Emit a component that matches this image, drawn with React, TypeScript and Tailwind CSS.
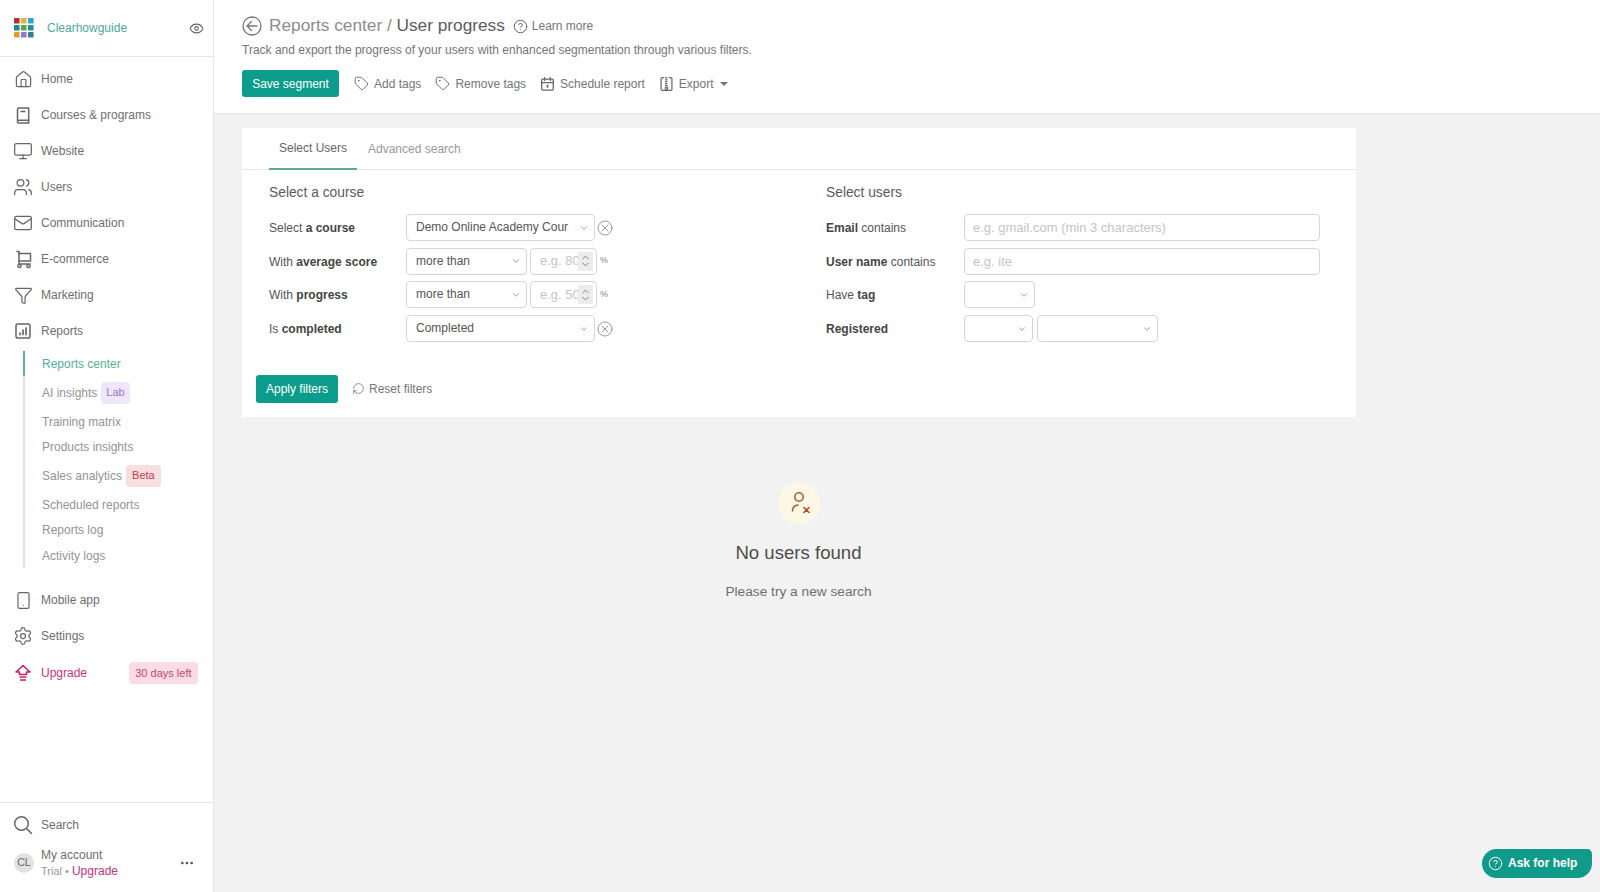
import React from "react";
import { House, Monitor, Users, Mail, Funnel, Smartphone, Settings, Eye, CircleHelp, Tag, ChevronDown, ChevronUp, RotateCcw, Ellipsis } from "lucide-react";

const Book = () => (
  <svg width="19" height="19" viewBox="0 0 19 19" fill="none" stroke="currentColor" strokeWidth="1.5" strokeLinejoin="round">
    <path d="M3.5 15.5V3.2a1.2 1.2 0 0 1 1.2-1.2h10v15H4.8a1.3 1.3 0 0 1-1.3-1.5Zm0 0a1.3 1.3 0 0 1 1.3-1.3h9.9" />
    <path d="M6.5 5.5h5" />
  </svg>
);
const Chart = () => (
  <svg width="18" height="18" viewBox="0 0 18 18" fill="none" stroke="currentColor" strokeWidth="1.5" strokeLinecap="round">
    <rect x="2" y="2" width="14" height="14" rx="1.8" />
    <path d="M6 12.5v-1.5M9 12.5V8M12 12.5V6" strokeWidth="1.7" />
  </svg>
);
const Cart = () => (
  <svg width="19" height="19" viewBox="0 0 19 19" fill="none" stroke="currentColor" strokeWidth="1.5" strokeLinejoin="round" strokeLinecap="round">
    <path d="M3 1.5h2v12.5h11" />
    <path d="M5 3.5h11.5v7.5H5" />
    <circle cx="5.5" cy="16" r="1.6" />
    <circle cx="14.5" cy="16" r="1.6" />
  </svg>
);
const UpArrow = () => (
  <svg width="18" height="18" viewBox="0 0 18 18" fill="none" stroke="currentColor" strokeWidth="1.6" strokeLinejoin="round">
    <path d="M9 1.5 16 8h-3.5v2.5h-7V8H2Z" />
    <path d="M5.5 13h7M6 16h6" />
  </svg>
);
const Magnifier = () => (
  <svg width="20" height="20" viewBox="0 0 20 20" fill="none" stroke="currentColor" strokeWidth="1.5" strokeLinecap="round">
    <circle cx="8.5" cy="8.5" r="6.8" />
    <path d="M13.5 13.5 18.5 18.5" />
  </svg>
);
const Logo = () => (
  <svg width="20" height="20" viewBox="0 0 20 20">
    {[["#b8302f", "#e0b33a", "#2aa5d8"], ["#27877f", "#5aa84a", "#2c8f8a"], ["#e39b2e", "#8f7cc8", "#3b7d99"]].flatMap((r, y) =>
      r.map((c, x) => <rect key={`${x}${y}`} x={x * 7} y={y * 7} width="5.6" height="5.6" rx="0.6" fill={c} />)
    )}
  </svg>
);
const NoUser = () => (
  <svg width="26" height="26" viewBox="0 0 26 26" fill="none" stroke="#a9603a" strokeWidth="1.6" strokeLinecap="round">
    <circle cx="13" cy="7" r="4.2" />
    <path d="M6.5 21c0-3.6 2-5.6 5.5-6" />
    <path d="M18 17.5l5 5M23 17.5l-5 5" stroke="#b9482a" />
  </svg>
);
const Back = () => (
  <svg width="20" height="20" viewBox="0 0 20 20" fill="none" stroke="#777" strokeWidth="1.3" strokeLinecap="round" strokeLinejoin="round">
    <circle cx="10" cy="10" r="9" />
    <path d="M15 10H5.5M9.5 5.5 5 10l4.5 4.5" />
  </svg>
);
const Clear = () => (
  <svg width="16" height="16" viewBox="0 0 16 16" fill="none" stroke="#999" strokeWidth="1" strokeLinecap="round" className="ml-[2px] shrink-0">
    <circle cx="8" cy="8" r="7" />
    <path d="M5 5l6 6M11 5l-6 6" />
  </svg>
);
const Cal = () => (
  <svg width="15" height="16" viewBox="0 0 16 16" fill="none" stroke="currentColor" strokeWidth="1.4" strokeLinecap="round" strokeLinejoin="round">
    <rect x="1.8" y="2.8" width="12.4" height="11.7" rx="1.4" />
    <path d="M1.8 6.5h12.4M5 1.2v3M11 1.2v3" />
    <path d="M8 9.5v1.6" strokeWidth="1.8" />
  </svg>
);
const Zip = () => (
  <svg width="15" height="16" viewBox="0 0 16 16" fill="none" stroke="currentColor" strokeWidth="1.3" strokeLinecap="round" strokeLinejoin="round">
    <path d="M5 1.2H3.5A1.3 1.3 0 0 0 2.2 2.5v11a1.3 1.3 0 0 0 1.3 1.3h9a1.3 1.3 0 0 0 1.3-1.3v-11a1.3 1.3 0 0 0-1.3-1.3H11" />
    <path d="M7 1.5h1.5M8.5 3.5H7M7 5.5h1.5M8.5 7.5H7M7 9.5h1.5" />
    <circle cx="8" cy="12.4" r="1.4" />
  </svg>
);

const Nav = ({ icon, label, h = "h-9", cls = "text-[#6e6e6e]" }: { icon: React.ReactNode; label: string; h?: string; cls?: string }) => (
  <div className={`flex items-center ${h} pl-[13px] pr-[16px] ${cls}`}>
    <span className="flex w-[20px] justify-center text-[#666]">{icon}</span>
    <span className="ml-[8px] text-[12px]">{label}</span>
  </div>
);

const Sub = ({ label, h = "h-[25px]", active, children }: { label: string; h?: string; active?: boolean; children?: React.ReactNode }) => (
  <div className={`flex items-center ${h} pt-[1px] pl-[17px] text-[12px] border-l-2 -ml-[2px] ${active ? "border-[#6fa99b] text-[#55ae9c]" : "border-transparent text-[#949494]"}`}>
    {label}
    {children}
  </div>
);

const Select = ({ w, text }: { w: string; text?: string }) => (
  <div className={`${w} h-[27px] shrink-0 flex items-center justify-between border border-[#d6d6d6] rounded-[4px] pl-[9px] pr-[5px] text-[12px] text-[#555] bg-white overflow-hidden`}>
    <span className="-mt-[1px] whitespace-nowrap">{text}</span>
    <ChevronDown size={10} strokeWidth={2} className="text-[#888] shrink-0" />
  </div>
);

const NumberBox = ({ ph }: { ph: string }) => (
  <div className="w-[67px] h-[27px] ml-[3px] shrink-0 flex items-center border border-[#d6d6d6] rounded-[4px] pl-[9px] bg-white relative overflow-hidden">
    <input readOnly placeholder={ph} className="w-[42px] text-[13px] outline-none placeholder:text-[#c4c4c4] bg-transparent" />
    <span className="absolute right-[3px] top-[3px] w-[15px] h-[19px] bg-[#ececec] flex flex-col items-center justify-center text-[#777]">
      <ChevronUp size={11} strokeWidth={2} className="-mb-[2px]" />
      <ChevronDown size={11} strokeWidth={2} className="-mt-[2px]" />
    </span>
  </div>
);

const Row = ({ label, children, w = "w-[137px]" }: { label: React.ReactNode; children: React.ReactNode; w?: string }) => (
  <div className="flex items-center h-[27px] mb-[6.7px]">
    <div className={`${w} shrink-0 text-[12px] text-[#555] pt-[1px]`}>{label}</div>
    {children}
  </div>
);

const TextBox = ({ ph }: { ph: string }) => (
  <input readOnly placeholder={ph} className="w-[356px] h-[27px] border border-[#d6d6d6] rounded-[4px] px-[8px] text-[13px] outline-none placeholder:text-[#c4c4c4] bg-white" />
);

const Action = ({ icon, label, children }: { icon: React.ReactNode; label: string; children?: React.ReactNode }) => (
  <div className="flex items-center text-[12px] text-[#757575] mr-[14px]">
    <span className="mr-[5px] text-[#666]">{icon}</span>
    {label}
    {children}
  </div>
);

const b = "font-bold text-[#444]";

export default function App() {
  return (
    <div className="h-screen w-full flex overflow-hidden bg-[#f2f2f2] font-['Liberation_Sans',sans-serif] relative">
      <aside className="w-[214px] shrink-0 h-full bg-white border-r border-[#e6e6e6] flex flex-col">
        <div className="h-[57px] shrink-0 border-b border-[#e6e6e6] flex items-center pl-[14px] pr-[9px]">
          <Logo />
          <span className="ml-[13px] text-[12px] text-[#4ba996] flex-1">Clearhowguide</span>
          <Eye size={15} strokeWidth={1.7} className="text-[#666]" />
        </div>
        <nav className="pt-[4px]">
          <Nav icon={<House size={19} strokeWidth={1.5} />} label="Home" />
          <Nav icon={<Book />} label="Courses & programs" />
          <Nav icon={<Monitor size={20} strokeWidth={1.5} />} label="Website" />
          <Nav icon={<Users size={20} strokeWidth={1.5} />} label="Users" />
          <Nav icon={<Mail size={20} strokeWidth={1.5} />} label="Communication" />
          <Nav icon={<Cart />} label="E-commerce" />
          <Nav icon={<Funnel size={19} strokeWidth={1.5} />} label="Marketing" />
          <Nav icon={<Chart />} label="Reports" />
          <div className="ml-[23px] mt-[2px] border-l-2 border-[#e2e2e2] h-[217px]">
            <Sub label="Reports center" active />
            <Sub label="AI insights" h="h-[33px]">
              <span className="ml-[4px] px-[5px] h-[22px] leading-[21px] rounded-[4px] bg-[#efe6fa] text-[#9b72cf] text-[11px]">Lab</span>
            </Sub>
            <Sub label="Training matrix" />
            <Sub label="Products insights" />
            <Sub label="Sales analytics" h="h-[33px]">
              <span className="ml-[4px] px-[6px] h-[22px] leading-[21px] rounded-[4px] bg-[#f8dede] text-[#b8444f] text-[11px]">Beta</span>
            </Sub>
            <Sub label="Scheduled reports" />
            <Sub label="Reports log" />
            <Sub label="Activity logs" h="h-[26px]" />
          </div>
          <div className="mt-[14px]">
            <Nav icon={<Smartphone size={19} strokeWidth={1.5} />} label="Mobile app" />
            <Nav icon={<Settings size={20} strokeWidth={1.5} />} label="Settings" />
            <div className="flex items-center h-[38px] pl-[13px] pr-[15px] text-[#c4337b]">
              <span className="flex w-[20px] justify-center text-[#c2246e]"><UpArrow /></span>
              <span className="ml-[8px] text-[12px] flex-1">Upgrade</span>
              <span className="h-[22px] px-[6.5px] leading-[22px] rounded-[4px] bg-[#fadbe6] text-[#c4476f] text-[11px]">30 days left</span>
            </div>
          </div>
        </nav>
        <div className="flex-1" />
        <div className="border-t border-[#e6e6e6] h-[90px] shrink-0 pt-[4px]">
          <Nav icon={<Magnifier />} label="Search" />
          <div className="flex items-center pl-[14px] pr-[18px] mt-[4px]">
            <span className="w-[20px] h-[20px] rounded-full bg-[#e2e2e2] text-[#666] text-[10.5px] flex items-center justify-center">CL</span>
            <div className="ml-[7px] flex-1">
              <div className="text-[12px] text-[#6e6e6e] leading-[16px]">My account</div>
              <div className="text-[11px] text-[#999] leading-[16px]">Trial • <span className="text-[12px] text-[#c4337b]">Upgrade</span></div>
            </div>
            <Ellipsis size={16} className="text-[#555]" />
          </div>
        </div>
      </aside>

      <main className="flex-1 min-w-0 flex flex-col">
        <header className="h-[114px] shrink-0 bg-white border-b border-[#e6e6e6] pl-[28px] pt-[16px]">
          <div className="flex items-center h-[20px]">
            <Back />
            <span className="ml-[7px] text-[17.25px] text-[#8c8c8c]">Reports center / <span className="text-[#5c5c5c]">User progress</span></span>
            <CircleHelp size={15} strokeWidth={1.6} className="ml-[8px] text-[#666]" />
            <span className="ml-[4px] text-[12px] text-[#757575]">Learn more</span>
          </div>
          <p className="mt-[6px] text-[12px] leading-[16px] text-[#757575]">Track and export the progress of your users with enhanced segmentation through various filters.</p>
          <div className="flex items-center mt-[12px]">
            <button className="h-[27px] w-[97px] rounded-[3px] bg-[#0c9c8b] text-white text-[12px] mr-[15px]">Save segment</button>
            <Action icon={<Tag size={15} strokeWidth={1.5} />} label="Add tags" />
            <Action icon={<Tag size={15} strokeWidth={1.5} />} label="Remove tags" />
            <Action icon={<Cal />} label="Schedule report" />
            <Action icon={<Zip />} label="Export">
              <span className="ml-[6px] w-0 h-0 border-l-[4px] border-r-[4px] border-t-[4px] border-l-transparent border-r-transparent border-t-[#777]" />
            </Action>
          </div>
        </header>

        <div className="pl-[28px] pt-[14px]">
          <section className="w-[1114px] h-[289px] bg-white">
            <div className="h-[42px] border-b border-[#e6e6e6] pl-[27px] flex">
              <div className="h-[42px] w-[88px] flex items-center justify-center border-b-2 border-[#5fa796] text-[12px] text-[#666] whitespace-nowrap">Select Users</div>
              <div className="h-[42px] ml-[11px] flex items-center text-[12px] text-[#999]">Advanced search</div>
            </div>
            <div className="flex pl-[27px] pt-[15px]">
              <div className="w-[557px]">
                <h3 className="text-[13.8px] text-[#5a5a5a] leading-[16px] mb-[13px]">Select a course</h3>
                <Row label={<>Select <span className={b}>a course</span></>}>
                  <Select w="w-[189px]" text="Demo Online Academy Cour" />
                  <Clear />
                </Row>
                <Row label={<>With <span className={b}>average score</span></>}>
                  <Select w="w-[121px]" text="more than" />
                  <NumberBox ph="e.g. 80" />
                  <span className="ml-[3px] text-[9px] text-[#888]">%</span>
                </Row>
                <Row label={<>With <span className={b}>progress</span></>}>
                  <Select w="w-[121px]" text="more than" />
                  <NumberBox ph="e.g. 50" />
                  <span className="ml-[3px] text-[9px] text-[#888]">%</span>
                </Row>
                <Row label={<>Is <span className={b}>completed</span></>}>
                  <Select w="w-[189px]" text="Completed" />
                  <Clear />
                </Row>
              </div>
              <div>
                <h3 className="text-[13.8px] text-[#5a5a5a] leading-[16px] mb-[13px]">Select users</h3>
                <Row w="w-[138px]" label={<><span className={b}>Email</span> contains</>}><TextBox ph="e.g. gmail.com (min 3 characters)" /></Row>
                <Row w="w-[138px]" label={<><span className={b}>User name</span> contains</>}><TextBox ph="e.g. ite" /></Row>
                <Row w="w-[138px]" label={<>Have <span className={b}>tag</span></>}><Select w="w-[71px]" /></Row>
                <Row w="w-[138px]" label={<span className={b}>Registered</span>}>
                  <Select w="w-[69px]" />
                  <span className="w-[4px]" />
                  <Select w="w-[121px]" />
                </Row>
              </div>
            </div>
            <div className="flex items-center pl-[14px] mt-[26px]">
              <button className="h-[28px] w-[82px] rounded-[3px] bg-[#0c9c8b] text-white text-[12px]">Apply filters</button>
              <RotateCcw size={13} strokeWidth={1.5} className="ml-[14px] text-[#777] -scale-y-100" />
              <span className="ml-[4px] text-[12px] text-[#757575]">Reset filters</span>
            </div>
          </section>
          <section className="w-[1115px] flex flex-col items-center pt-[65px] pr-[2px]">
            <div className="w-[42px] h-[42px] rounded-full bg-[#fdf8e6] flex items-center justify-center"><NoUser /></div>
            <h2 className="mt-[17px] text-[18.6px] leading-[24px] text-[#4d4d4d]">No users found</h2>
            <p className="mt-[17px] text-[13.7px] leading-[20px] text-[#6e6e6e]">Please try a new search</p>
          </section>
        </div>
      </main>

      <div className="absolute left-[1482px] top-[849px] w-[110px] h-[29px] bg-[#0f9a8a] rounded-l-[15px] rounded-br-[15px] rounded-tr-[5px] text-white flex items-center pl-[6px] pb-[1px]">
        <CircleHelp size={15} strokeWidth={1.6} />
        <span className="ml-[5px] text-[12px] font-bold">Ask for help</span>
      </div>
    </div>
  );
}
